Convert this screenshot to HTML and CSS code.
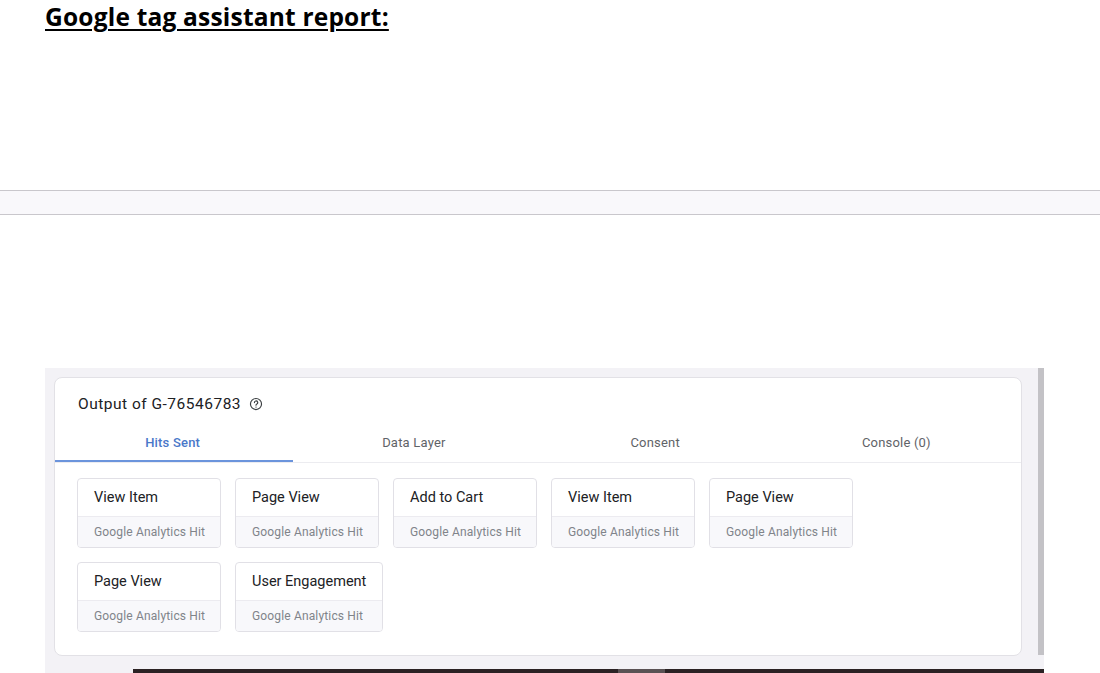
FILE: index.html
```html
<!DOCTYPE html>
<html lang="en">
  <head>
    <meta charset="UTF-8" />
    <meta name="viewport" content="width=device-width, initial-scale=1.0" />
    <title>Google tag assistant report</title>
    <link rel="stylesheet" href="styles.css">
  </head>
  <body>
    <h1 class="doc-title">Google tag assistant report:</h1>

    <!-- page break band -->
    <div class="band"></div>

    <div class="shot">
      <div class="shot-body">
        <div class="shot-main">
          <div class="output-card">
            <div class="output-head">
              Output of G-76546783
              <svg class="help" width="14" height="14" viewBox="0 0 24 24">
                <circle cx="12" cy="12" r="9.5" fill="none" stroke="#3c4043" stroke-width="2"/>
                <path d="M9.3 9.6a2.8 2.8 0 1 1 4.2 2.4c-.9.5-1.5 1-1.5 2.2" fill="none" stroke="#3c4043" stroke-width="2" stroke-linecap="round"/>
                <circle cx="12" cy="17.3" r="1.2" fill="#3c4043"/>
              </svg>
            </div>

            <div class="tabs">
              <div class="tab active">Hits Sent</div>
              <div class="tab">Data Layer</div>
              <div class="tab">Consent</div>
              <div class="tab">Console (0)</div>
            </div>

            <div class="hits">
              <div class="hit"><div class="hit-name">View Item</div><div class="hit-type">Google Analytics Hit</div></div>
              <div class="hit"><div class="hit-name">Page View</div><div class="hit-type">Google Analytics Hit</div></div>
              <div class="hit"><div class="hit-name">Add to Cart</div><div class="hit-type">Google Analytics Hit</div></div>
              <div class="hit"><div class="hit-name">View Item</div><div class="hit-type">Google Analytics Hit</div></div>
              <div class="hit"><div class="hit-name">Page View</div><div class="hit-type">Google Analytics Hit</div></div>
              <div class="hit"><div class="hit-name">Page View</div><div class="hit-type">Google Analytics Hit</div></div>
              <div class="hit"><div class="hit-name">User Engagement</div><div class="hit-type">Google Analytics Hit</div></div>
            </div>
          </div>
        </div>
        <div class="scrollbar"></div>
      </div>
      <div class="taskbar"><span class="taskbar-item"></span></div>
    </div>
  </body>
</html>
```

FILE: styles.css
```css
body {
  margin: 0;
  padding: 0;
  background: #ffffff;
  font-family: Roboto, "Liberation Sans", sans-serif;
}

.doc-title {
  margin: 0;
  padding: 1px 0 0 45px;
  height: 189px;
  font-family: "Open Sans", "Liberation Sans", sans-serif;
  font-size: 24.5px;
  font-weight: bold;
  letter-spacing: 0.2px;
  text-decoration: underline;
  text-decoration-thickness: 2px;
  text-underline-offset: 3px;
  color: #000;
  line-height: 32px;
}

.band {
  height: 23px;
  background: #f9f8fb;
  border-top: 1px solid #c9c7cc;
  border-bottom: 1px solid #c9c7cc;
}

.shot {
  display: flex;
  flex-direction: column;
  margin: 153px 0 0 45px;
  width: 999px;
  height: 305px;
  background: #f3f2f6;
}

.shot-body {
  flex: 1;
  display: flex;
}

.shot-main {
  flex: 1;
  padding: 9px 0 0 9px;
}

.scrollbar {
  width: 6px;
  height: 287px;
  background: #c3c2c6;
}

.output-card {
  width: 968px;
  height: 279px;
  box-sizing: border-box;
  background: #fff;
  border: 1px solid #e2e1e6;
  border-radius: 8px;
  overflow: hidden;
}

.output-head {
  display: flex;
  align-items: center;
  gap: 8px;
  padding: 17px 0 0 23px;
  height: 34px;
  box-sizing: border-box;
  font-size: 15.5px;
  letter-spacing: 0.5px;
  color: #202124;
}

.help {
  margin-top: 1px;
}

.tabs {
  display: grid;
  grid-template-columns: repeat(4, 1fr);
  margin: 14px 0 0 -3px;
  padding-right: 4px;
  border-bottom: 1px solid #ececf0;
}

.tab {
  height: 36px;
  box-sizing: border-box;
  padding-top: 9px;
  text-align: center;
  font-size: 13px;
  letter-spacing: 0.2px;
  color: #5f6368;
  border-bottom: 2px solid transparent;
}

.tab.active {
  color: #4a78c9;
  font-weight: 500;
  border-bottom-color: #6b94dc;
}

.hits {
  display: flex;
  flex-wrap: wrap;
  gap: 14px 14px;
  padding: 15px 0 0 22px;
  width: 810px;
}

.hit {
  min-width: 144px;
  box-sizing: border-box;
  border: 1px solid #e1e0e6;
  border-radius: 4px;
  overflow: hidden;
}

.hit-name {
  height: 38px;
  box-sizing: border-box;
  padding: 10px 16px 0;
  font-size: 14.5px;
  color: #202124;
  border-bottom: 1px solid #ecebf0;
  white-space: nowrap;
}

.hit-type {
  height: 30px;
  box-sizing: border-box;
  padding: 8px 12px 0 16px;
  background: #f8f8fb;
  font-size: 12px;
  letter-spacing: 0.15px;
  color: #80848a;
  white-space: nowrap;
}

.taskbar {
  margin-left: 88px;
  height: 4px;
  background: #2b2224;
  position: relative;
}

.taskbar-item {
  position: absolute;
  left: 485px;
  width: 47px;
  height: 4px;
  background: #5a5254;
}
```
